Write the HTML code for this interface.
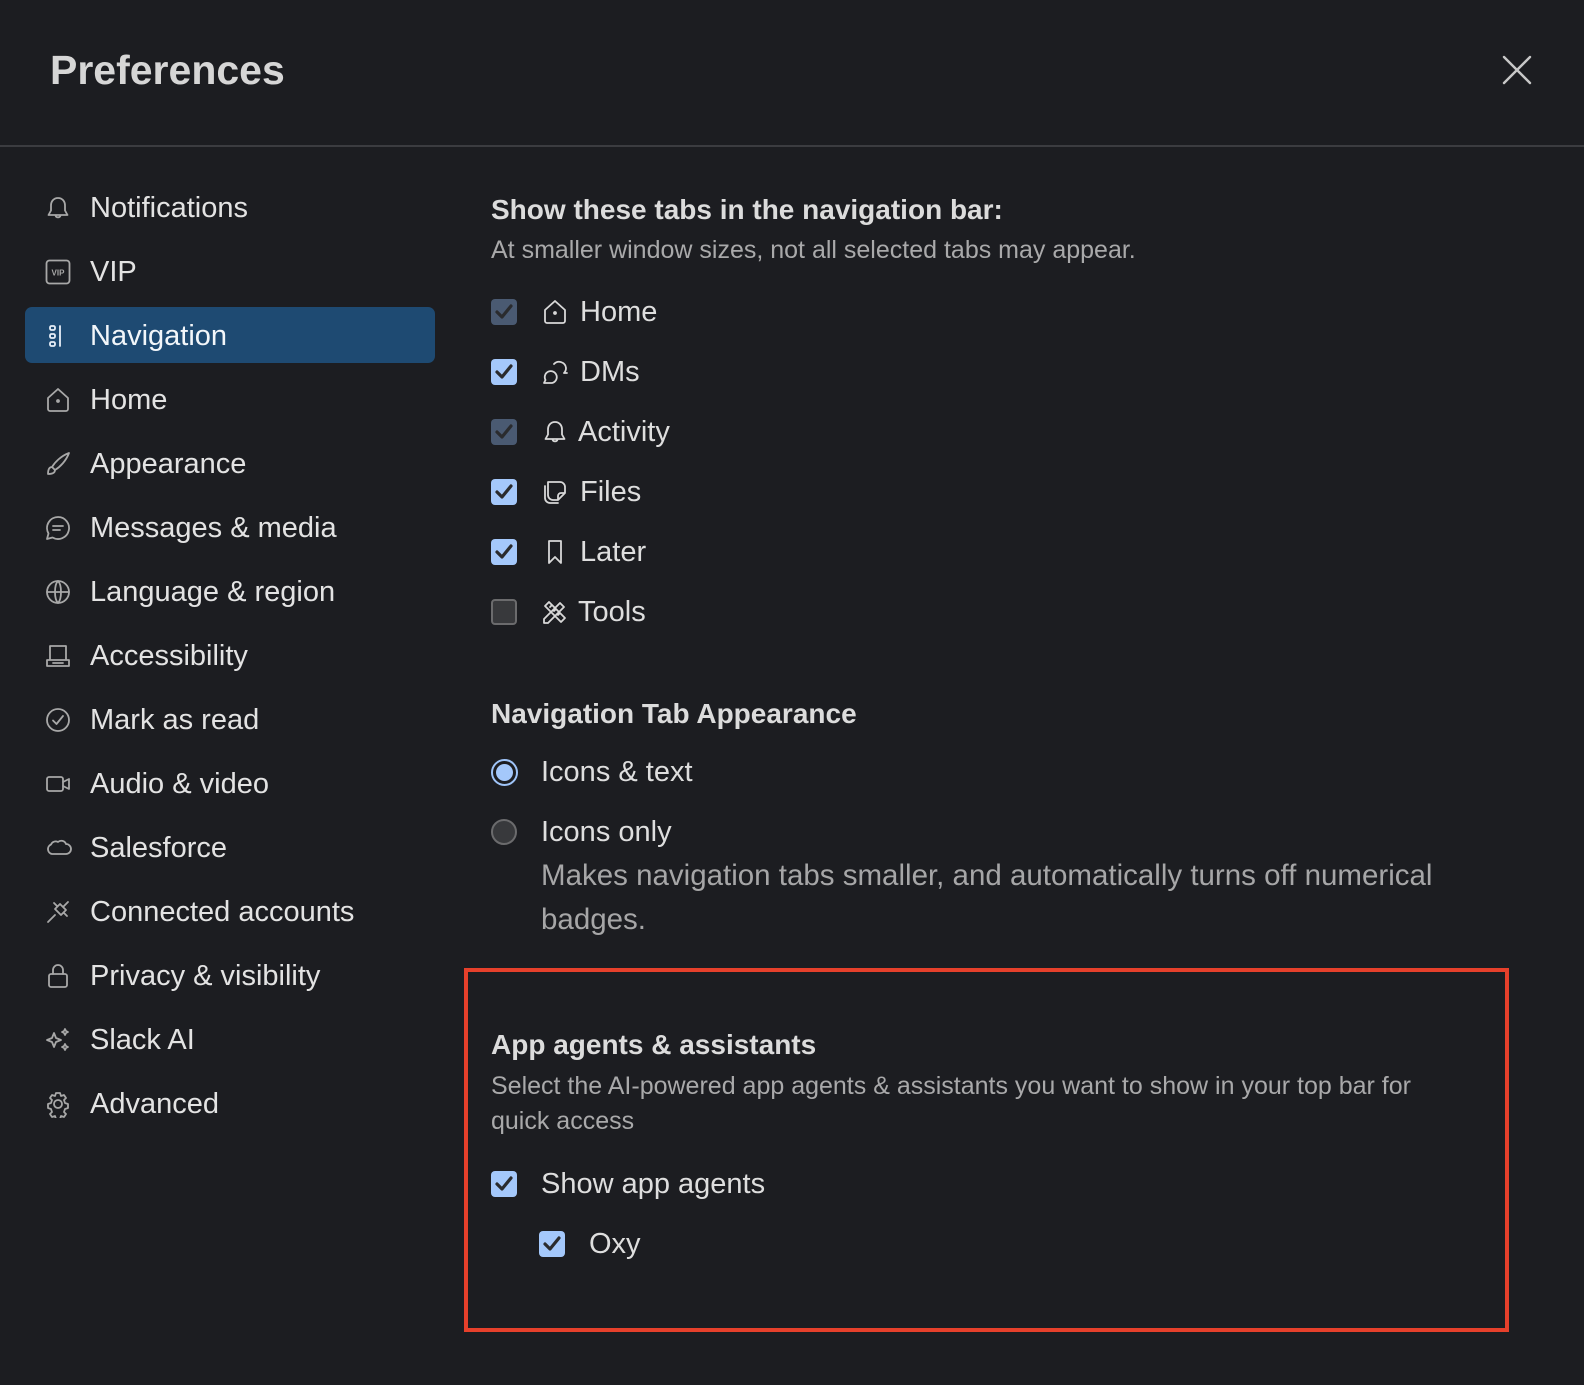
<!DOCTYPE html>
<html><head><meta charset="utf-8">
<style>
*{margin:0;padding:0;box-sizing:border-box}
body{width:1584px;height:1385px;background:#1c1d21;font-family:"Liberation Sans",sans-serif;color:#e3e3e3;position:relative;overflow:hidden}
.a{position:absolute;white-space:nowrap}
.t{height:40px;line-height:40px}
.side{font-size:29px;left:90px}
.ic{position:absolute;left:44px;width:28px;height:28px}
.ic svg,.ni svg{width:28px;height:28px;fill:none;stroke:#a8a8a8;stroke-width:1.8;stroke-linecap:round;stroke-linejoin:round}
.h{font-weight:bold;font-size:28px;color:#dcdcdc}
.sub{font-size:25px;color:#a9a9aa}
.lbl{font-size:29px;color:#dedede}
.desc{font-size:29.5px;color:#a6a6a7}
.cb{position:absolute;width:26px;height:26px;border-radius:4px;background:#a4c8fb}
.cb.dis{background:#4a5a72}
.cb.off{background:#38393c;border:2px solid #6b6b6d}
.cb svg{position:absolute;left:4px;top:5px;width:18px;height:16px;fill:none;stroke:#2a2b2e;stroke-width:3.2;stroke-linecap:round;stroke-linejoin:round}
.ni{position:absolute;left:541px;width:28px;height:28px}
</style></head><body>
<div class="a" style="left:50px;top:46px;font-size:41px;font-weight:bold;color:#d6d6d6;line-height:48px">Preferences</div>
<svg class="a" style="left:1502px;top:55px" width="30" height="30" viewBox="0 0 30 30"><path d="M2 2L28 28M28 2L2 28" stroke="#c8c8c8" stroke-width="2.4" stroke-linecap="round"/></svg>
<div class="a" style="left:0;top:145px;width:1584px;height:2px;background:#3b3c40"></div>

<div class="a" style="left:25px;top:307px;width:410px;height:56px;border-radius:7px;background:#1e4a72"></div>

<!-- sidebar -->
<div class="ic" style="top:194px"><svg viewBox="0 0 28 28"><path d="M14 4c-4.5 0-7 3.5-7 7.5v5L4.5 21h19L21 16.5v-5C21 7.5 18.5 4 14 4zM11.5 21.5a2.6 2.6 0 005 0"/></svg></div>
<div class="a t side" style="top:188px">Notifications</div>
<div class="ic" style="top:258px"><svg viewBox="0 0 28 28"><rect x="2.5" y="2.5" width="23" height="23" rx="3"/><text x="14" y="17.5" font-size="8" fill="#a8a8a8" stroke="none" text-anchor="middle" font-family="Liberation Sans" font-weight="bold">VIP</text></svg></div>
<div class="a t side" style="top:252px">VIP</div>
<div class="ic" style="top:322px"><svg viewBox="0 0 28 28" style="stroke:#e6eef8"><rect x="6" y="4" width="5" height="4" rx="1.5"/><rect x="6" y="12" width="5" height="4" rx="1.5"/><rect x="6" y="20" width="5" height="4" rx="1.5"/><path d="M16 4v20"/></svg></div>
<div class="a t side" style="top:316px;color:#f2f6fa">Navigation</div>
<div class="ic" style="top:386px"><svg viewBox="0 0 28 28"><path d="M4 12L14 3l10 9v11a2 2 0 01-2 2H6a2 2 0 01-2-2z"/><circle cx="14" cy="15" r="1" fill="#a8a8a8"/></svg></div>
<div class="a t side" style="top:380px">Home</div>
<div class="ic" style="top:450px"><svg viewBox="0 0 28 28"><path d="M25 3C17 6 11 12 8 17l3 3c5-3 11-9 14-17zM8 17c-3 0-4 3-4 7 4 0 7-1 7-4"/></svg></div>
<div class="a t side" style="top:444px">Appearance</div>
<div class="ic" style="top:514px"><svg viewBox="0 0 28 28"><path d="M14 3a11 11 0 00-9.5 16.5L3 25l5.5-1.5A11 11 0 1014 3zM9 12h10M9 16h7"/></svg></div>
<div class="a t side" style="top:508px">Messages &amp; media</div>
<div class="ic" style="top:578px"><svg viewBox="0 0 28 28"><circle cx="14" cy="14" r="11"/><path d="M3 14h22M14 3c-4 4-4 18 0 22M14 3c4 4 4 18 0 22"/></svg></div>
<div class="a t side" style="top:572px">Language &amp; region</div>
<div class="ic" style="top:642px"><svg viewBox="0 0 28 28"><path d="M6 4h16v14H6zM3 18h22v6H3zM9 21h10"/></svg></div>
<div class="a t side" style="top:636px">Accessibility</div>
<div class="ic" style="top:706px"><svg viewBox="0 0 28 28"><circle cx="14" cy="14" r="11"/><path d="M9 14.5l3.5 3.5L19 10"/></svg></div>
<div class="a t side" style="top:700px">Mark as read</div>
<div class="ic" style="top:770px"><svg viewBox="0 0 28 28"><rect x="3" y="7" width="16" height="14" rx="2"/><path d="M19 12l6-3v10l-6-3"/></svg></div>
<div class="a t side" style="top:764px">Audio &amp; video</div>
<div class="ic" style="top:834px"><svg viewBox="0 0 28 28"><path d="M8 20a5 5 0 01-1-9.5A5 5 0 0114 8a5 5 0 018 2 5 5 0 010 10z"/></svg></div>
<div class="a t side" style="top:828px">Salesforce</div>
<div class="ic" style="top:898px"><svg viewBox="0 0 28 28"><path d="M16 6l6 6-5 5-6-6zM19 9l5-5M11 17l-7 7M13 8l-3-3M20 15l3 3"/></svg></div>
<div class="a t side" style="top:892px">Connected accounts</div>
<div class="ic" style="top:962px"><svg viewBox="0 0 28 28"><rect x="5" y="12" width="18" height="13" rx="2"/><path d="M9 12V8a5 5 0 0110 0v4"/></svg></div>
<div class="a t side" style="top:956px">Privacy &amp; visibility</div>
<div class="ic" style="top:1026px"><svg viewBox="0 0 28 28"><path d="M10 7l2 5 5 2-5 2-2 5-2-5-5-2 5-2zM21 3l1 2 2 1-2 1-1 2-1-2-2-1 2-1zM21 18l1 2 2 1-2 1-1 2-1-2-2-1 2-1z"/></svg></div>
<div class="a t side" style="top:1020px">Slack AI</div>
<div class="ic" style="top:1090px"><svg viewBox="0 0 28 28"><circle cx="14" cy="14" r="4"/><path d="M12 3h4l1 3 3-1 2 3-2 2 1 3 3 1v4l-3 1-1 3 2 2-2 3-3-1-1 3h-4l-1-3-3 1-2-3 2-2-1-3-3-1v-4l3-1 1-3-2-2 2-3 3 1z"/></svg></div>
<div class="a t side" style="top:1084px">Advanced</div>

<!-- right -->
<div class="a t h" style="left:491px;top:190px">Show these tabs in the navigation bar:</div>
<div class="a t sub" style="left:491px;top:230px">At smaller window sizes, not all selected tabs may appear.</div>

<div class="cb dis" style="left:491px;top:299px"><svg viewBox="0 0 18 16"><path d="M2 8l5 5L16 2"/></svg></div>
<div class="ni" style="top:298px"><svg viewBox="0 0 28 28" style="stroke:#d8d8d8"><path d="M4 12L14 3l10 9v11a2 2 0 01-2 2H6a2 2 0 01-2-2z"/><circle cx="14" cy="15" r="1" fill="#d8d8d8"/></svg></div>
<div class="a t lbl" style="left:580px;top:292px">Home</div>

<div class="cb" style="left:491px;top:359px"><svg viewBox="0 0 18 16"><path d="M2 8l5 5L16 2"/></svg></div>
<div class="ni" style="top:358px"><svg viewBox="0 0 28 28" style="stroke:#d8d8d8"><path d="M13 6a7 7 0 0112 4c0 2-1 4-2 5M23 15h3M3 25l1.5-3A6 6 0 1111 25z"/></svg></div>
<div class="a t lbl" style="left:580px;top:352px">DMs</div>

<div class="cb dis" style="left:491px;top:419px"><svg viewBox="0 0 18 16"><path d="M2 8l5 5L16 2"/></svg></div>
<div class="ni" style="top:418px"><svg viewBox="0 0 28 28" style="stroke:#d8d8d8"><path d="M14 4c-4.5 0-7 3.5-7 7.5v5L4.5 21h19L21 16.5v-5C21 7.5 18.5 4 14 4zM11.5 21.5a2.6 2.6 0 005 0"/></svg></div>
<div class="a t lbl" style="left:578px;top:412px">Activity</div>

<div class="cb" style="left:491px;top:479px"><svg viewBox="0 0 18 16"><path d="M2 8l5 5L16 2"/></svg></div>
<div class="ni" style="top:478px"><svg viewBox="0 0 28 28" style="stroke:#d8d8d8"><path d="M7 4h12a5 5 0 015 5v6l-7 7H12a5 5 0 01-5-5zM24 15h-4a3 3 0 00-3 3v4M4 8v12a5 5 0 005 5h8"/></svg></div>
<div class="a t lbl" style="left:580px;top:472px">Files</div>

<div class="cb" style="left:491px;top:539px"><svg viewBox="0 0 18 16"><path d="M2 8l5 5L16 2"/></svg></div>
<div class="ni" style="top:538px"><svg viewBox="0 0 28 28" style="stroke:#d8d8d8"><path d="M8 3h12v22l-6-6-6 6z"/></svg></div>
<div class="a t lbl" style="left:580px;top:532px">Later</div>

<div class="cb off" style="left:491px;top:599px"></div>
<div class="ni" style="top:598px"><svg viewBox="0 0 28 28" style="stroke:#d8d8d8"><path d="M3 21L19 5l4 4L7 25H3zM4 8l4-4 16 16-4 4zM9 9l2-2M13 13l2-2M17 17l2-2"/></svg></div>
<div class="a t lbl" style="left:578px;top:592px">Tools</div>

<div class="a t h" style="left:491px;top:694px">Navigation Tab Appearance</div>
<div class="a" style="left:491px;top:759px;width:27px;height:27px;border-radius:50%;border:2px solid #9fc4f8;background:#1c1d21"><div style="position:absolute;left:3px;top:3px;width:17px;height:17px;border-radius:50%;background:#a4c8fb"></div></div>
<div class="a t lbl" style="left:541px;top:752px">Icons &amp; text</div>
<div class="a" style="left:491px;top:819px;width:26px;height:26px;border-radius:50%;border:2px solid #6b6b6d;background:#38393c"></div>
<div class="a t lbl" style="left:541px;top:812px">Icons only</div>
<div class="a t desc" style="left:541px;top:856px">Makes navigation tabs smaller, and automatically turns off numerical</div>
<div class="a t desc" style="left:541px;top:900px">badges.</div>

<div class="a" style="left:464px;top:968px;width:1045px;height:364px;border:4px solid #e6402b"></div>
<div class="a t h" style="left:491px;top:1025px">App agents &amp; assistants</div>
<div class="a t sub" style="left:491px;top:1066px">Select the AI-powered app agents &amp; assistants you want to show in your top bar for</div>
<div class="a t sub" style="left:491px;top:1101px">quick access</div>
<div class="cb" style="left:491px;top:1171px"><svg viewBox="0 0 18 16"><path d="M2 8l5 5L16 2"/></svg></div>
<div class="a t lbl" style="left:541px;top:1164px">Show app agents</div>
<div class="cb" style="left:539px;top:1231px"><svg viewBox="0 0 18 16"><path d="M2 8l5 5L16 2"/></svg></div>
<div class="a t lbl" style="left:589px;top:1224px">Oxy</div>
</body></html>
